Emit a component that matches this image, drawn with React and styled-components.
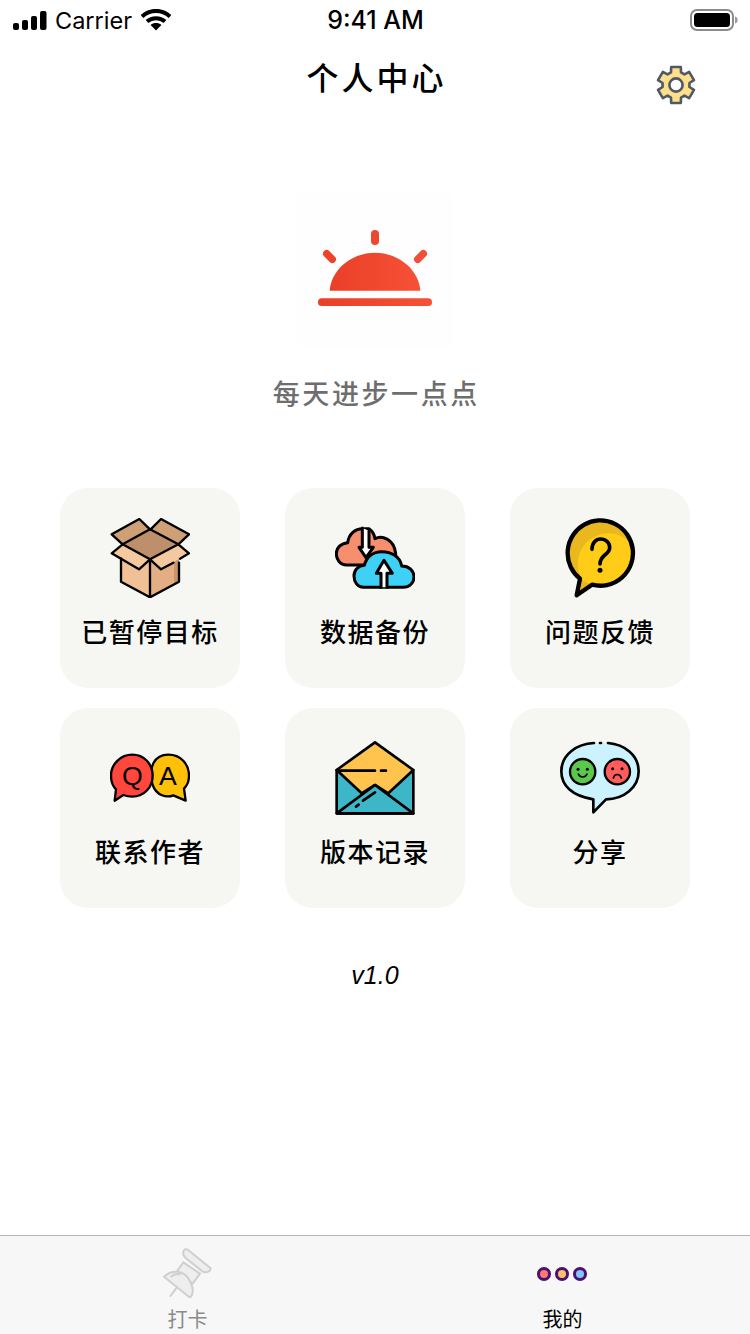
import React from 'react';
import styled, { createGlobalStyle } from 'styled-components';

const GlobalStyle = createGlobalStyle`
  html, body {
    margin: 0;
    padding: 0;
    background: #fff;
  }
  * {
    box-sizing: border-box;
  }
`;

const cjk = `"Noto Sans CJK SC", "Noto Sans", sans-serif`;

const gearPath = () => {
  const teeth = 6;
  const pts = [];
  for (let i = 0; i < teeth; i++) {
    const a = (i / teeth) * Math.PI * 2 - Math.PI / 2;
    const w = Math.PI / teeth;
    [
      [13.6, a - w * 0.72],
      [18.6, a - w * 0.5],
      [18.6, a + w * 0.5],
      [13.6, a + w * 0.72]
    ].forEach(([r, t]) => {
      pts.push(`${(20 + r * Math.cos(t)).toFixed(2)} ${(20 + r * Math.sin(t)).toFixed(2)}`);
    });
  }
  return `M${pts.join('L')}Z`;
};

const GearIcon = () => (
  <svg width="40" height="40" viewBox="0 0 40 40">
    <path d={gearPath()} fill="#ffdf8c" stroke="#4e5a66" strokeWidth="2.6" strokeLinejoin="round" />
    <circle cx="20" cy="20" r="6.6" fill="#fff" stroke="#4e5a66" strokeWidth="2.6" />
  </svg>
);

const SunLogo = () => (
  <svg width="156" height="156" viewBox="81 6 468 468">
    <defs>
      <linearGradient id="sun" x1="0" x2="1" y1="0" y2="0">
        <stop offset="0" stopColor="#ea3f28" />
        <stop offset="1" stopColor="#f65136" />
      </linearGradient>
    </defs>
    <path d="M179 302C184 236 248 188 315 188C382 188 446 236 451 302Z" fill="url(#sun)" />
    <rect x="144" y="325" width="342" height="23" rx="11.5" fill="url(#sun)" />
    <rect x="303" y="120" width="24" height="45" rx="12" fill="#ee4730" />
    <path d="M170 191L187 208" stroke="#ec432b" strokeWidth="22" strokeLinecap="round" />
    <path d="M460 191L443 208" stroke="#f44e36" strokeWidth="22" strokeLinecap="round" />
  </svg>
);

const BoxIcon = () => (
  <svg width="80" height="80" viewBox="150 84 240 240">
    <path d="M183 205V275L270 322V208L237 238Z" fill="#f0c096" />
    <path d="M357 205V275L270 322V208L303 238Z" fill="#e3ae84" />
    <path d="M342 215V283L357 275V205Z" fill="#c99468" />
    <path d="M188 163L270 118L355 163L270 208Z" fill="#bd8f6b" />
    <path d="M155 133L238 87L270 118L188 163Z" fill="#cf9f76" />
    <path d="M272 118L303 87L387 133L355 163Z" fill="#cf9f76" />
    <path d="M188 163L155 190L237 238L270 208Z" fill="#f4c9a0" />
    <path d="M355 163L387 190L303 238L270 208Z" fill="#f4c9a0" />
    <g fill="none" stroke="#000" strokeWidth="7" strokeLinejoin="round" strokeLinecap="round">
      <path d="M188 163L270 118L355 163L270 208Z" />
      <path d="M188 163L155 133L238 87L270 118" />
      <path d="M272 118L303 87L387 133L355 163" />
      <path d="M188 163L155 190L237 238L270 208" />
      <path d="M355 163L387 190L360 206M340 218L303 238L270 208" />
      <path d="M183 205V275L270 322V208M270 322L357 275V218" />
    </g>
  </svg>
);

const CloudIcon = () => (
  <svg width="80" height="80" viewBox="150 84 240 240">
    <g stroke="#000" strokeWidth="9" strokeLinejoin="round" strokeLinecap="round">
      <path d="M240 225H185C165 225 154 208 154 191C154 173 168 160 188 158C192 132 210 116 233 116H252C262 122 268 134 270 146C290 136 326 145 332 190V225Z" fill="#f78f6f" />
      <path d="M232 114V172H222L243 203L265 172H252V122" fill="#fff" />
      <path d="M290 292H235C218 292 207 275 207 258C207 240 220 227 238 226C245 200 265 185 290 185C320 185 345 200 350 228C372 228 387 242 387 260C387 280 372 292 355 292Z" fill="#3fd0f5" />
      <path d="M288 292V250H274L297 211L322 250H306V292" fill="#fff" />
    </g>
  </svg>
);

const QuestionIcon = () => (
  <svg width="80" height="80" viewBox="180 84 240 240">
    <defs>
      <clipPath id="bubble">
        <circle cx="300" cy="188" r="98" />
      </clipPath>
    </defs>
    <path d="M240 266A98 98 0 1 1 276 284L230 316Z" fill="#e8b81e" />
    <circle cx="325" cy="222" r="92" fill="#ffcd17" clipPath="url(#bubble)" />
    <path d="M240 266A98 98 0 1 1 276 284L230 316Z" fill="none" stroke="#000" strokeWidth="13" strokeLinejoin="round" />
    <path d="M276 178C276 158 288 147 302 147C318 147 329 158 329 173C329 194 300 194 300 222" fill="none" stroke="#000" strokeWidth="11" strokeLinecap="round" />
    <circle cx="300" cy="241" r="7.5" fill="#000" />
  </svg>
);

const IconLetter = styled.text`
  font-family: "Liberation Sans", Arial, sans-serif;
  font-size: 80px;
  fill: #000;
`;

const ChatIcon = () => (
  <svg width="80" height="80" viewBox="150 84 240 240">
    <g stroke="#000" strokeWidth="7" strokeLinejoin="round">
      <path d="M278 225C262 170 285 134 325 134C362 134 387 162 387 197C387 215 380 228 372 236L377 272L340 256C320 264 290 258 278 225Z" fill="#ffc107" />
      <path d="M217 134C252 134 278 162 278 197C278 232 252 260 217 260C207 260 198 258 190 255L164 272L168 238C158 228 153 214 153 197C153 162 182 134 217 134Z" fill="#ff473e" />
    </g>
    <IconLetter x="217" y="226" textAnchor="middle">Q</IconLetter>
    <IconLetter x="324" y="226" textAnchor="middle">A</IconLetter>
  </svg>
);

const EnvelopeIcon = () => (
  <svg width="80" height="80" viewBox="150 84 240 240">
    <g stroke="#000" strokeWidth="8" strokeLinejoin="round" strokeLinecap="round">
      <path d="M155 180H385V310H155Z" fill="#3db6c8" />
      <path d="M155 180L270 97L385 180L310 250L270 225L230 250Z" fill="#ffc44d" />
      <path d="M155 310L270 225L385 310Z" fill="#3db6c8" />
      <path d="M160 182H270M288 182H303" fill="none" />
      <path d="M234 272L270 247M213 290L221 284" fill="none" />
    </g>
  </svg>
);

const ShareIcon = () => (
  <svg width="80" height="80" viewBox="180 84 240 240">
    <path d="M262 266C215 258 184 226 184 184C184 134 235 99 300 99C365 99 416 134 416 184C416 232 372 268 318 268L281 307V268Z" fill="#ccf2ff" />
    <path d="M282 99C230 101 184 134 184 184C184 226 215 258 280 268V307L318 268C372 268 416 232 416 184C416 134 372 103 324 99" fill="none" stroke="#000" strokeWidth="8" strokeLinecap="round" strokeLinejoin="round" />
    <path d="M300 99H303" stroke="#000" strokeWidth="8" strokeLinecap="round" />
    <circle cx="248" cy="185" r="38" fill="#5ac84a" stroke="#000" strokeWidth="7" />
    <circle cx="352" cy="185" r="38" fill="#ff5d5d" stroke="#000" strokeWidth="7" />
    <circle cx="234" cy="178" r="4.5" fill="#000" />
    <circle cx="262" cy="178" r="4.5" fill="#000" />
    <path d="M235 192C240 204 256 204 261 192" fill="none" stroke="#000" strokeWidth="5" strokeLinecap="round" />
    <circle cx="338" cy="176" r="4.5" fill="#000" />
    <circle cx="366" cy="176" r="4.5" fill="#000" />
    <path d="M340 204C344 190 360 190 364 204" fill="none" stroke="#000" strokeWidth="5" strokeLinecap="round" />
  </svg>
);

const PinIcon = () => (
  <svg width="50" height="50" viewBox="187 69 150 150">
    <g stroke="#cfcfcf" strokeWidth="6" strokeLinejoin="round" strokeLinecap="round" fill="#eee">
      <path d="M209 213L226 191" fill="none" />
      <path d="M248 112L298 146L276 176L228 140Z" />
      <path d="M190 155C214 132 250 136 266 165C280 190 280 206 268 218Z" />
      <path d="M253 73C246 76 245 90 254 98L305 139C315 145 330 140 330 130L266 78C262 74 257 72 253 73Z" />
      <path d="M212 154C220 148 228 146 238 148" fill="none" />
    </g>
  </svg>
);

const SignalIcon = () => (
  <svg width="34" height="19" viewBox="0 0 34 19">
    <rect x="0" y="12" width="6" height="7" rx="2" fill="#000" />
    <rect x="9" y="9" width="6" height="10" rx="2" fill="#000" />
    <rect x="18" y="5" width="6" height="14" rx="2" fill="#000" />
    <rect x="27" y="0" width="6.5" height="19" rx="2" fill="#000" />
  </svg>
);

const WifiIcon = () => (
  <svg width="30" height="22" viewBox="0 0 30 22">
    <path d="M1 7.5C9 0 21 0 29 7.5" fill="none" stroke="#000" strokeWidth="4" />
    <path d="M6 12.5C11 8 19 8 24 12.5" fill="none" stroke="#000" strokeWidth="4" />
    <path d="M15 21.5L9.6 16C12.6 13.4 17.4 13.4 20.4 16Z" fill="#000" />
  </svg>
);

const BatteryIcon = () => (
  <svg width="48" height="22" viewBox="0 0 48 22">
    <rect x="1" y="1" width="42" height="20" rx="6" fill="none" stroke="#8c8c8c" strokeWidth="2" />
    <rect x="4" y="4" width="36" height="14" rx="3.5" fill="#000" />
    <path d="M45 7.5C47 8 47.6 9.4 47.6 11C47.6 12.6 47 14 45 14.5Z" fill="#9a9a9a" />
  </svg>
);

const items = [
  { label: '已暂停目标', Icon: BoxIcon },
  { label: '数据备份', Icon: CloudIcon },
  { label: '问题反馈', Icon: QuestionIcon },
  { label: '联系作者', Icon: ChatIcon },
  { label: '版本记录', Icon: EnvelopeIcon },
  { label: '分享', Icon: ShareIcon }
];

const App = () => (
  <Page>
    <GlobalStyle />
    <StatusBar>
      <StatusLeft>
        <SignalIcon />
        <Carrier>Carrier</Carrier>
        <WifiIcon />
      </StatusLeft>
      <Time>9:41 AM</Time>
      <StatusRight>
        <BatteryIcon />
      </StatusRight>
    </StatusBar>

    <NavBar>
      <Title>个人中心</Title>
      <SettingsButton>
        <GearIcon />
      </SettingsButton>
    </NavBar>

    <Main>
      <LogoBox>
        <SunLogo />
      </LogoBox>
      <Slogan>每天进步一点点</Slogan>
      <Grid>
        {items.map(({ label, Icon }) => (
          <Card key={label}>
            <Icon />
            <CardLabel>{label}</CardLabel>
          </Card>
        ))}
      </Grid>
      <Version>v1.0</Version>
    </Main>

    <TabBar>
      <Tab>
        <TabIcon>
          <PinIcon />
        </TabIcon>
        <TabLabel>打卡</TabLabel>
      </Tab>
      <Tab>
        <TabIcon>
          <Dots>
            <Dot color="#ff7a70" />
            <Dot color="#ffc06a" />
            <Dot color="#85c4f5" />
          </Dots>
        </TabIcon>
        <TabLabel active>我的</TabLabel>
      </Tab>
    </TabBar>
  </Page>
);

export default App;

const Page = styled.div`
  width: 750px;
  height: 1334px;
  display: flex;
  flex-direction: column;
  overflow: hidden;
  background: #fff;
`;

const StatusBar = styled.div`
  height: 40px;
  flex: none;
  display: grid;
  grid-template-columns: 1fr auto 1fr;
  align-items: center;
  padding: 0 12px 0 13px;
  font-family: Inter, "Liberation Sans", sans-serif;
  color: #000;
`;

const StatusLeft = styled.div`
  display: flex;
  align-items: center;
  gap: 8px;
`;

const Carrier = styled.span`
  font-size: 23.5px;
  margin-right: 1px;
`;

const Time = styled.span`
  font-size: 25px;
  font-weight: 500;
`;

const StatusRight = styled.div`
  display: flex;
  justify-content: flex-end;
`;

const NavBar = styled.div`
  height: 76px;
  flex: none;
  display: grid;
  grid-template-columns: 1fr auto 1fr;
  align-items: center;
  padding: 0 54px;
`;

const Title = styled.h1`
  grid-column: 2;
  margin: -4px -3px 0 0;
  font-family: ${cjk};
  font-size: 32px;
  font-weight: 500;
  letter-spacing: 3px;
  color: #000;
`;

const SettingsButton = styled.div`
  justify-self: end;
  display: flex;
  margin-top: 14px;
`;

const Main = styled.main`
  flex: 1;
  display: flex;
  flex-direction: column;
  align-items: center;
  padding-top: 76px;
`;

const LogoBox = styled.div`
  width: 156px;
  height: 156px;
  display: flex;
  background: #fefefe;
  border-radius: 8px;
`;

const Slogan = styled.div`
  margin-top: 24px;
  font-family: ${cjk};
  font-size: 27px;
  line-height: 42px;
  font-weight: 500;
  letter-spacing: 2.6px;
  margin-right: -2.6px;
  color: #6e6e6e;
`;

const Grid = styled.div`
  margin-top: 74px;
  display: grid;
  grid-template-columns: repeat(3, 180px);
  grid-auto-rows: 200px;
  column-gap: 45px;
  row-gap: 20px;
`;

const Card = styled.div`
  display: flex;
  flex-direction: column;
  align-items: center;
  padding-top: 30px;
  background: #f6f7f2;
  border-radius: 28px;
`;

const CardLabel = styled.div`
  margin-top: 13px;
  font-family: ${cjk};
  font-size: 26px;
  line-height: 40px;
  font-weight: 500;
  letter-spacing: 1.5px;
  color: #000;
`;

const Version = styled.div`
  margin-top: 52px;
  font-family: "Liberation Sans", Arial, sans-serif;
  font-style: italic;
  font-size: 25px;
  line-height: 30px;
  color: #000;
`;

const TabBar = styled.div`
  height: 99px;
  flex: none;
  display: grid;
  grid-template-columns: 1fr 1fr;
  background: #f7f7f7;
  border-top: 1px solid #b4b4b4;
`;

const Tab = styled.div`
  display: flex;
  flex-direction: column;
  align-items: center;
  padding-top: 12px;
`;

const TabIcon = styled.div`
  height: 50px;
  display: flex;
  align-items: center;
  justify-content: center;
`;

const TabLabel = styled.div`
  margin-top: 7px;
  font-family: ${cjk};
  font-size: 20px;
  line-height: 28px;
  color: ${({ active }) => (active ? '#000' : '#8a8a8a')};
`;

const Dots = styled.div`
  display: flex;
  gap: 4px;
  margin: 2px 1px 0 0;
`;

const Dot = styled.span`
  width: 14px;
  height: 14px;
  border-radius: 50%;
  border: 3px solid #4a1170;
  background: ${({ color }) => color};
`;
